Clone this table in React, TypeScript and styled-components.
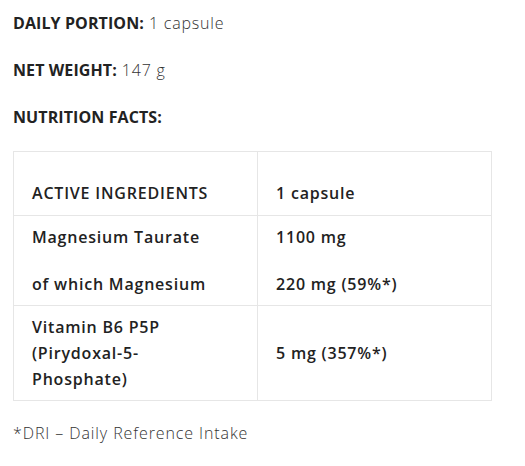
import { Fragment } from 'react';
import styled, { createGlobalStyle } from 'styled-components';

const GlobalStyle = createGlobalStyle`
  body {
    margin: 0;
    background: #ffffff;
    font-family: 'Open Sans', 'Noto Sans', sans-serif;
    color: #222222;
  }
`;

const Page = styled.div`
  padding: 10px 13px;
`;

const InfoLine = styled.p`
  margin: 0 0 21px;
  font-size: 16px;
  line-height: 26px;
  font-weight: 300;
  letter-spacing: 0.8px;
  color: #333333;
`;

const Label = styled.strong`
  font-weight: 700;
  letter-spacing: 0.1px;
  color: #222222;
`;

const Table = styled.table`
  width: 479px;
  table-layout: fixed;
  border-collapse: collapse;
  margin: 1px 0 19px;
`;

const Cell = styled.td<{ $head?: boolean }>`
  border: 1px solid #e6e6e6;
  padding: ${({ $head }) => ($head ? '28px 18px 9px' : '8px 18px')};
  font-size: 16px;
  line-height: 26px;
  font-weight: 600;
  letter-spacing: 0.8px;
  color: #222222;
  vertical-align: middle;
`;

const CellText = styled.p`
  margin: 0;
  & + & {
    margin-top: 21px;
  }
`;

const Footnote = styled.p`
  margin: 0;
  font-size: 16px;
  line-height: 26px;
  font-weight: 300;
  letter-spacing: 0.9px;
  color: #333333;
`;

// each entry is a paragraph, each paragraph a list of lines
const rows: { name: string[][]; amount: string[][] }[] = [
  { name: [['Magnesium Taurate'], ['of which Magnesium']], amount: [['1100 mg'], ['220 mg (59%*)']] },
  { name: [['Vitamin B6 P5P', '(Pirydoxal-5-', 'Phosphate)']], amount: [['5 mg (357%*)']] },
];

const Lines = ({ lines }: { lines: string[] }) => (
  <CellText>
    {lines.map((l, i) => (
      <Fragment key={l}>
        {i > 0 && <br />}
        {l}
      </Fragment>
    ))}
  </CellText>
);

export default function App() {
  return (
    <>
      <GlobalStyle />
      <Page>
        <InfoLine>
          <Label>DAILY PORTION:</Label> 1 capsule
        </InfoLine>
        <InfoLine>
          <Label>NET WEIGHT:</Label> 147 g
        </InfoLine>
        <InfoLine>
          <Label>NUTRITION FACTS:</Label>
        </InfoLine>
        <Table>
          <colgroup>
            <col style={{ width: 244 }} />
            <col />
          </colgroup>
          <tbody>
            <tr>
              <Cell $head>ACTIVE INGREDIENTS</Cell>
              <Cell $head>1 capsule</Cell>
            </tr>
            {rows.map((row) => (
              <tr key={row.name[0][0]}>
                <Cell>
                  {row.name.map((p) => (
                    <Lines key={p[0]} lines={p} />
                  ))}
                </Cell>
                <Cell>
                  {row.amount.map((p) => (
                    <Lines key={p[0]} lines={p} />
                  ))}
                </Cell>
              </tr>
            ))}
          </tbody>
        </Table>
        <Footnote>*DRI – Daily Reference Intake</Footnote>
      </Page>
    </>
  );
}
